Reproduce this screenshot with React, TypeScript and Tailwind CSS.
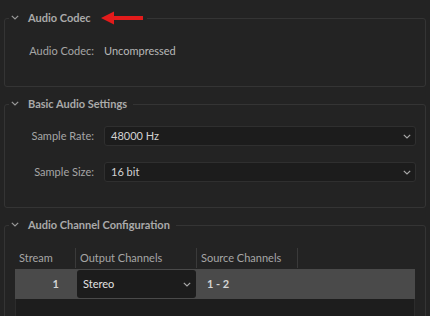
import React from "react";

const Chevron = ({ className = "" }: { className?: string }) => (
  <svg width="8" height="5" viewBox="0 0 8 5" className={className} fill="none">
    <path d="M0.8 0.8 L4 4 L7.2 0.8" stroke="currentColor" strokeWidth="1.2" />
  </svg>
);

const Legend = ({ title, arrow = false }: { title: string; arrow?: boolean }) => (
  <legend className="ml-[4px] px-[2px] h-[16px]">
    <div className="flex items-center h-[16px]">
      <Chevron className="text-[#9a9a9a] mb-[2px]" />
      <span className="ml-[9px] pr-[4px] text-[11px] font-bold text-[#aaaaaa] leading-[16px]">{title}</span>
      {arrow && (
        <svg width="44" height="14" viewBox="0 0 44 14" className="ml-[6px]">
          <polygon points="0,7 13,0.5 13,5 42,5 42,9 13,9 13,13.5" fill="#e31b1b" />
        </svg>
      )}
    </div>
  </legend>
);

const Select = ({ value }: { value: string }) => (
  <div className="flex-1 h-[20px] flex items-center justify-between rounded-[3px] bg-[#1c1c1c] border border-[#2f2f2f] pl-[6px] pr-[4px] text-[11px] text-[#d2d2d2]">
    <span>{value}</span>
    <Chevron className="text-[#a8a8a8]" />
  </div>
);

export default function App() {
  return (
    <div
      className="w-[430px] h-[316px] overflow-hidden bg-[#232323] pt-[10px]"
      style={{ fontFamily: 'Lato, "Open Sans", sans-serif' }}
    >
      <fieldset className="ml-[4px] w-[422px] h-[77px] border border-[#343434] rounded-[3px]">
        <Legend title="Audio Codec" arrow />
        <div className="flex items-center mt-[17px] text-[11px] leading-[16px]">
          <span className="w-[89px] text-right text-[#a6a6a6]">Audio Codec:</span>
          <span className="ml-[10px] text-[#b8b8b8]">Uncompressed</span>
        </div>
      </fieldset>

      <fieldset className="ml-[4px] mt-[9px] w-[422px] h-[112px] border border-[#343434] rounded-[3px]">
        <Legend title="Basic Audio Settings" />
        <div className="flex flex-col gap-[16px] mt-[14px] pr-[9px] text-[11px]">
          <div className="flex items-center">
            <span className="w-[89px] text-right text-[#a6a6a6]">Sample Rate:</span>
            <div className="ml-[10px] flex-1 flex">
              <Select value="48000 Hz" />
            </div>
          </div>
          <div className="flex items-center">
            <span className="w-[89px] text-right text-[#a6a6a6]">Sample Size:</span>
            <div className="ml-[10px] flex-1 flex">
              <Select value="16 bit" />
            </div>
          </div>
        </div>
      </fieldset>

      <fieldset className="ml-[4px] mt-[9px] w-[422px] h-[120px] border border-[#343434] rounded-[3px]">
        <Legend title="Audio Channel Configuration" />
        <div className="mt-[15px] ml-[10px] w-[400px] text-[11px]">
          <div className="flex h-[20px] items-center text-[#a6a6a6]">
            <div className="w-[61px] pl-[4px] border-r border-[#3a3a3a] h-full flex items-center">Stream</div>
            <div className="w-[121px] pl-[4px] border-r border-[#3a3a3a] h-full flex items-center">Output Channels</div>
            <div className="w-[101px] pl-[4px] border-r border-[#3a3a3a] h-full flex items-center">Source Channels</div>
          </div>
          <div className="flex h-[30px] bg-[#4a4a4a] mt-[1px]">
            <div className="w-[62px] flex items-center justify-end pr-[18px] text-[#d4d4d4] font-bold">1</div>
            <div className="w-[119px] my-[1px] flex items-center justify-between bg-[#1c1c1c] rounded-[3px] pl-[6px] pr-[5px] text-[#e2e2e2]">
              <span>Stereo</span>
              <Chevron className="text-[#a8a8a8]" />
            </div>
            <div className="flex-1 flex items-center pl-[11px] text-[#d4d4d4] font-bold">1 - 2</div>
          </div>
          <div className="h-[40px] bg-[#1d1d1d] border-l border-r border-[#2c2c2c]" />
        </div>
      </fieldset>
    </div>
  );
}
